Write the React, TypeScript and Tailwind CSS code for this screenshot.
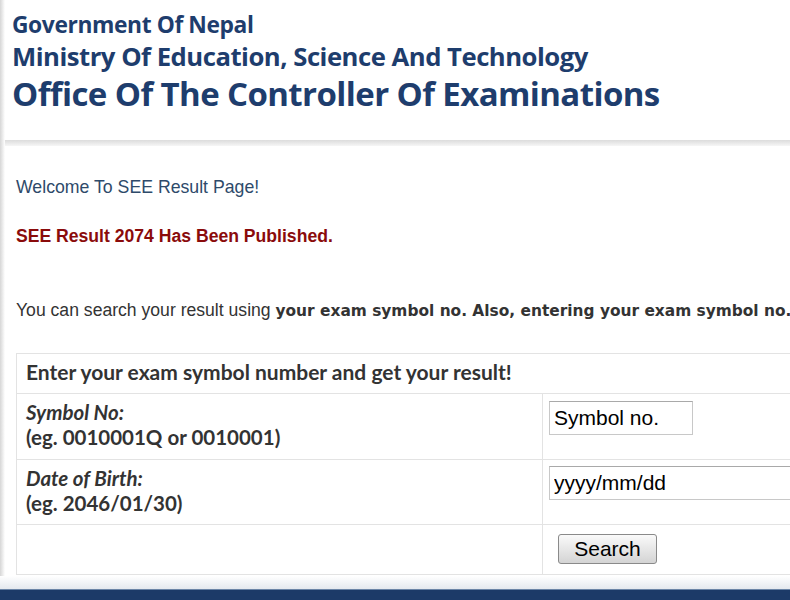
import React from "react";

const calibri = { fontFamily: "'Open Sans', Lato, sans-serif" };
const lato = { fontFamily: "Lato, 'Open Sans', sans-serif" };
const arial = { fontFamily: "'Liberation Sans', Arial, sans-serif" };

export default function App() {
  return (
    <div className="flex h-[600px] w-[790px] flex-col overflow-hidden bg-white">
      <div className="flex min-h-0 flex-1">
        {/* left shadow edge */}
        <div className="w-[5px] shrink-0 bg-gradient-to-r from-[#d6d6d6] to-white" />

        <div className="flex min-w-0 flex-1 flex-col">
          <header className="h-[140px] pl-[7px] pt-[9px] text-[#1e3d6d]" style={calibri}>
            <div className="text-[22.8px] font-bold leading-[31px] tracking-[-0.4px]">Government Of Nepal</div>
            <div className="mt-[1px] text-[25.7px] font-bold leading-[31px] tracking-[-0.5px]">
              Ministry Of Education, Science And Technology
            </div>
            <div className="mt-[2px] text-[33px] font-bold leading-[40px] tracking-[-0.6px]">
              Office Of The Controller Of Examinations
            </div>
          </header>

          <div className="h-[6px] bg-gradient-to-b from-[#dcdcdc] to-[#f6f6f6]" />

          <main className="pl-[11px]" style={arial}>
            <p className="mt-[30px] text-[17.7px] leading-[22px] text-[#2e4a6a]">Welcome To SEE Result Page!</p>
            <p className="mt-[27px] text-[17.6px] font-bold leading-[22px] text-[#8a0b0b]">
              SEE Result 2074 Has Been Published.
            </p>
            <p className="mt-[52px] whitespace-nowrap text-[17.6px] leading-[22px] text-[#333]">
              You can search your result using{" "}
              <b className="text-[15.4px]" style={{ fontFamily: "'DejaVu Sans', Verdana, sans-serif" }}>
                your exam symbol no. Also, entering your exam symbol no.
              </b>
            </p>

            <table
              className="mt-[31px] w-[900px] border-collapse border border-[#e3e3e3] text-[20.5px] text-[#333]"
              style={lato}
            >
              <tbody>
                <tr className="h-[40px] border-b border-[#e3e3e3]">
                  <td colSpan={2} className="px-[9px] pt-[6px] align-top text-[21px] font-bold leading-[24px]">
                    Enter your exam symbol number and get your result!
                  </td>
                </tr>
                <tr className="h-[66px] border-b border-[#e3e3e3]">
                  <td className="w-[526px] border-r border-[#e3e3e3] px-[9px] pt-[6px] align-top font-bold leading-[24.6px]">
                    <i>Symbol No:</i>
                    <br />
                    (eg. 0010001Q or 0010001)
                  </td>
                  <td className="pl-[6px] pt-[7px] align-top">
                    <input
                      className="h-[34px] w-[144px] border border-[#c8c8c8] border-t-[#a9a9a9] px-[4px] text-[21px] text-black outline-none placeholder:text-black"
                      style={arial}
                      placeholder="Symbol no."
                    />
                  </td>
                </tr>
                <tr className="h-[65px] border-b border-[#e3e3e3]">
                  <td className="border-r border-[#e3e3e3] px-[9px] pt-[6px] align-top font-bold leading-[24.6px]">
                    <i>Date of Birth:</i>
                    <br />
                    (eg. 2046/01/30)
                  </td>
                  <td className="pl-[6px] pt-[6px] align-top">
                    <input
                      className="h-[34px] w-[300px] border border-[#c8c8c8] border-t-[#a9a9a9] px-[4px] text-[21px] text-black outline-none placeholder:text-black"
                      style={arial}
                      placeholder="yyyy/mm/dd"
                    />
                  </td>
                </tr>
                <tr className="h-[50px]">
                  <td className="border-r border-[#e3e3e3]" />
                  <td className="pl-[15px] pt-[8px] align-top">
                    <button
                      className="h-[30px] w-[99px] rounded-[3px] border border-[#8a8a8a] bg-gradient-to-b from-[#fafafa] to-[#d4d4d4] text-[21px] leading-none text-black"
                      style={arial}
                    >
                      Search
                    </button>
                  </td>
                </tr>
              </tbody>
            </table>
          </main>
        </div>
      </div>

      <div className="h-[13px] shrink-0 bg-gradient-to-b from-white to-[#e4e8ee]" />
      <div className="h-[11px] shrink-0 border-t border-[#6b84a6] bg-[#1c3a68]" />
    </div>
  );
}
